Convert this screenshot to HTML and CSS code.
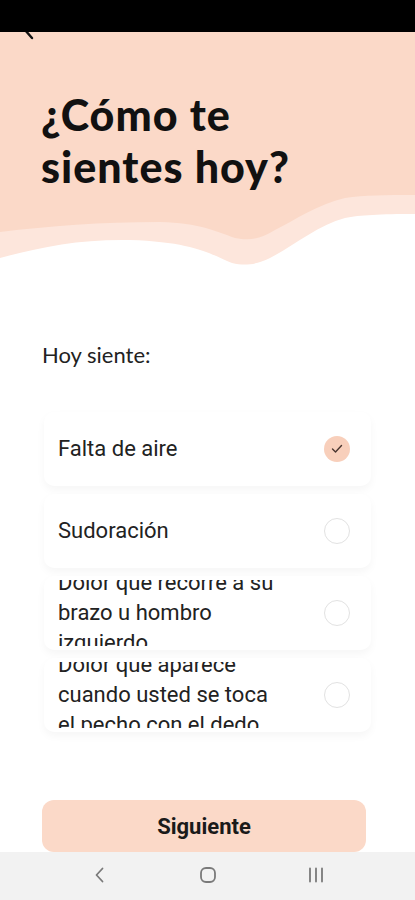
FILE: index.html
```html
<!DOCTYPE html>
<html lang="es">
<head>
<meta charset="utf-8">
<title>¿Cómo te sientes hoy?</title>
<link rel="stylesheet" href="styles.css">
</head>
<body>
<div class="screen">
  <div class="statusbar"></div>
  <header class="hero">
    <svg class="back" width="20" height="10" viewBox="0 0 20 10"><path d="M5 -2 L12 6" stroke="#111" stroke-width="2.4" stroke-linecap="round" fill="none"/></svg>
    <h1 class="title">¿Cómo te<br>sientes hoy?</h1>
  </header>
  <svg class="wave" width="415" height="80" viewBox="0 0 415 80" preserveAspectRatio="none">
    <path d="M0 0 H415 V19 C380 19 360 20 345 23 C318 30 295 50 270 63 C255 70 245 71 232 68 C212 60 195 47 130 45 C80 44 40 52 0 63 Z" fill="#fde6dc"/>
    <path d="M0 0 H415 V0 C385 0 365 0 345 3 C318 9 295 25 275 35 C260 44 250 46 235 43 C215 36 200 28 160 27 C100 27 50 31 0 37 Z" fill="#fbd9c8"/>
  </svg>
  <main class="content">
    <p class="label">Hoy siente:</p>
    <ul class="options">
      <li class="option">
        <span class="option-text"><span>Falta de aire</span></span>
        <span class="radio checked"><svg width="12" height="10" viewBox="0 0 12 10"><path d="M1.5 5 L4.5 8 L10.5 1.5" stroke="#4a3630" stroke-width="1.4" fill="none" stroke-linecap="round" stroke-linejoin="round"/></svg></span>
      </li>
      <li class="option">
        <span class="option-text"><span>Sudoración</span></span>
        <span class="radio"></span>
      </li>
      <li class="option">
        <span class="option-text"><span>Dolor que recorre a su<br>brazo u hombro<br>izquierdo</span></span>
        <span class="radio"></span>
      </li>
      <li class="option">
        <span class="option-text"><span>Dolor que aparece<br>cuando usted se toca<br>el pecho con el dedo</span></span>
        <span class="radio"></span>
      </li>
    </ul>
    <button class="next">Siguiente</button>
  </main>
  <nav class="navbar">
    <svg width="20" height="20" viewBox="0 0 20 20"><path d="M12.5 3.5 L6.5 10 L12.5 16.5" stroke="#7a7a7a" stroke-width="1.8" fill="none" stroke-linecap="round" stroke-linejoin="round"/></svg>
    <svg width="20" height="20" viewBox="0 0 20 20"><rect x="3" y="3" width="14" height="14" rx="5" stroke="#7a7a7a" stroke-width="1.8" fill="none"/></svg>
    <svg width="20" height="20" viewBox="0 0 20 20"><path d="M4 3.5 V16.5 M10 3.5 V16.5 M16 3.5 V16.5" stroke="#7a7a7a" stroke-width="1.8" fill="none" stroke-linecap="round"/></svg>
  </nav>
</div>
</body>
</html>
```

FILE: styles.css
```css
* { box-sizing: border-box; }
html, body { margin: 0; padding: 0; background: #fff; }
.screen {
  width: 415px;
  height: 900px;
  overflow: hidden;
  display: flex;
  flex-direction: column;
  font-family: "Roboto", "Liberation Sans", sans-serif;
}
.statusbar { height: 32px; background: #000; flex: none; }
.hero {
  background: #fbd9c8;
  height: 163px;
  flex: none;
  padding: 0 0 0 20px;
}
.back { display: block; }
.title {
  margin: 47px 0 0 21px;
  font-family: "Lato", sans-serif;
  font-weight: 900;
  font-size: 43px;
  line-height: 52px;
  color: #111;
  letter-spacing: 1px;
}
.wave { display: block; flex: none; }
.content {
  flex: 1;
  display: flex;
  flex-direction: column;
}
.label {
  margin: 67px 0 0 42px;
  font-family: "Lato", sans-serif;
  font-size: 22px;
  line-height: 26px;
  color: #222;
}
.options {
  list-style: none;
  margin: 44px 0 0 44px;
  padding: 0;
  width: 327px;
  display: flex;
  flex-direction: column;
  gap: 8px;
}
.option {
  height: 74px;
  background: #fff;
  border-radius: 10px;
  box-shadow: 0 4px 8px rgba(0, 0, 0, 0.04);
  display: flex;
  align-items: center;
  justify-content: space-between;
  padding: 0 21px 0 14px;
}
.option-text {
  height: 66px;
  display: flex;
  flex-direction: column;
  justify-content: center;
  overflow: hidden;
  font-size: 22px;
  line-height: 30px;
  color: #222;
  white-space: nowrap;
}
.radio {
  width: 26px;
  height: 26px;
  border-radius: 50%;
  border: 1.5px solid #e2e2e2;
  flex: none;
  display: flex;
  align-items: center;
  justify-content: center;
}
.radio.checked {
  border: none;
  background: #f8cfbb;
}
.next {
  margin: 68px 0 0 42px;
  width: 324px;
  height: 52px;
  border: none;
  border-radius: 12px;
  background: #fbd9c8;
  font-family: "Roboto", sans-serif;
  font-weight: 700;
  font-size: 22px;
  color: #1a1a1a;
  padding: 0;
}
.navbar {
  height: 48px;
  flex: none;
  background: #f2f2f2;
  display: flex;
  align-items: center;
  justify-content: center;
  gap: 88px;
  padding-bottom: 2px;
}
```
